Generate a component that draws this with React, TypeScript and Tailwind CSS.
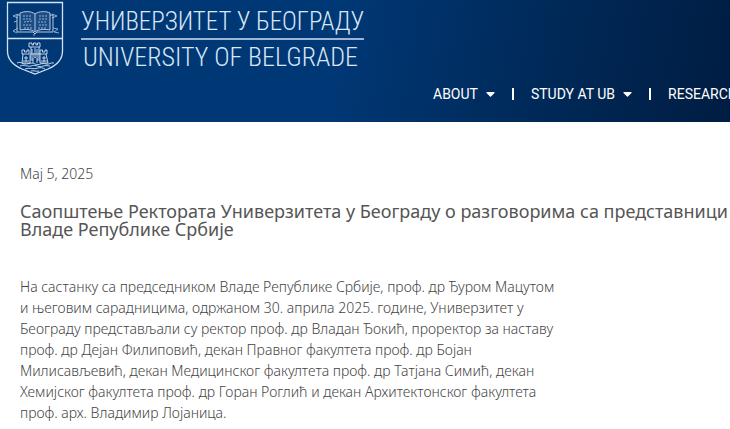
const menu = [
  { label: 'ABOUT', href: '#about' },
  { label: 'STUDY AT UB', href: '#study' },
  { label: 'RESEARCH', href: '#research' },
]

const statement = [
  'На састанку са председником Владе Републике Србије, проф. др Ђуром Мацутом',
  'и његовим сарадницима, одржаном 30. априла 2025. године, Универзитет у',
  'Београду представљали су ректор проф. др Владан Ђокић, проректор за наставу',
  'проф. др Дејан Филиповић, декан Правног факултета проф. др Бојан',
  'Милисављевић, декан Медицинског факултета проф. др Татјана Симић, декан',
  'Хемијског факултета проф. др Горан Роглић и декан Архитектонског факултета',
  'проф. арх. Владимир Лојаница.',
]

function Crest() {
  return (
    <svg width="58" height="74" viewBox="0 0 58 74" fill="none" stroke="#d3e2f2" className="mt-px shrink-0" aria-hidden="true">
      <path d="M1.5 1.5H56.5V50C56.5 60 49 65 42 68L29 73L16 68C9 65 1.5 60 1.5 50Z" strokeWidth="1.3" />
      <path d="M2 37.5H56" strokeWidth="1.3" />
      {/* open book */}
      <g strokeWidth="1" opacity="0.85">
        <path d="M14 12C19 10 25 10 29 13C33 10 40 10 44 12V29C39 28 33 28 29 31C25 28 19 28 14 29Z" fill="#d3e2f2" fillOpacity="0.15" />
        <path d="M29 13V30M14 14H11V31H27L29 33L31 31H47V14H44" />
        <path d="M17 15L25 15M17 18H25M18 21L26 20M17 24H25M33 15H41M33 18H41M32 21H40M33 24H41M18 27H26M32 27H40" strokeWidth="0.8" strokeDasharray="2 1" />
        <path d="M12 13L7 15L12 17M11 20L8 21M12 27L7 30L11 32M46 13L51 15L46 17M47 27L52 28L48 31L53 32M28 33V35" strokeWidth="0.8" />
      </g>
      {/* fortress on the river */}
      <g strokeWidth="0.9">
        <path d="M23 42V46H34V42H31.500V44H30V42H27.500V44H26V42ZM25 46V53H33V46M16 49V53H23V49H21V51H18.500V49ZM34 49V53H41V49H39V51H36.500V49ZM17 53L16 62H24V53M34 53V62H42L40 53M24 53H34M20 55V61M26 48V52M29 47V52M31 48V52M38 55V61" />
        <path d="M24 55H34M24 57H27M31 57H34M24 59H27M31 59H34M27 62V58C27 56 31 56 31 58V62M18 57H22M36 57H40M17 60H23M35 60H41" />
        <path d="M11 62C14 60 16 63 19 63C23 63 25 61 29 63C33 65 36 61 40 63C43 64 45 61 48 62M14 65C18 63 21 66 25 65C30 63 33 67 37 65C40 64 42 65 44 65M19 68C24 66 28 69 32 67C35 66 37 67 39 68M25 70C28 69 30 71 33 70" />
      </g>
    </svg>
  )
}

export default function App() {
  return (
    <div className="min-h-screen overflow-hidden bg-white font-['Noto_Sans',sans-serif] text-[#444]">
      <header className="bg-linear-[100deg,#003876_45%,#002b5c_70%,#001d42] pb-[18px] text-white">
        <a href="#home" className="flex w-fit gap-[17px] pl-[6px]">
          <Crest />
          <span className="flex flex-col pt-2 font-['Roboto_Condensed','Liberation_Sans_Narrow',sans-serif] text-[25px] font-light leading-[28px] text-[#d9e6f5]">
            <span className="border-b-2 border-[#9db5d5] pb-[2px]">УНИВЕРЗИТЕТ У БЕОГРАДУ</span>
            <span className="pl-[2px] pt-[3px] text-[26px]">UNIVERSITY OF BELGRADE</span>
          </span>
        </a>
        <nav className="ml-[433px] mt-[9px] flex items-center whitespace-nowrap font-['Roboto',sans-serif] text-[14px] leading-5">
          {menu.map((item, i) => (
            <div key={item.label} className="flex items-center">
              {i > 0 && <span className="mx-[17px] h-3 w-[2px] bg-white" />}
              <a href={item.href} className="flex items-center gap-2">
                {item.label}
                {item.label !== 'RESEARCH' && (
                  <svg width="9" height="5" viewBox="0 0 9 5" fill="currentColor" aria-hidden="true">
                    <path d="M1 0H8Q9 0 8.500 1L5 4.600Q4.500 5 4 4.600L0.500 1Q0 0 1 0Z" />
                  </svg>
                )}
              </a>
            </div>
          ))}
        </nav>
      </header>

      <main className="px-5 pt-[42px]">
        <time dateTime="2025-05-05" className="block text-[14px] font-[350] leading-5">Мај 5, 2025</time>
        <h1 className="mt-[18px] whitespace-nowrap text-[18px] font-normal leading-[18px] text-[#555]">
          Саопштење Ректората Универзитета у Београду о разговорима са представници
          <br />
          Владе Републике Србије
        </h1>
        <p className="mt-[38px] whitespace-nowrap text-[14px] font-[350] leading-[21px]">
          {statement.map((line) => (
            <span key={line} className="block">{line}</span>
          ))}
        </p>
      </main>
    </div>
  )
}
